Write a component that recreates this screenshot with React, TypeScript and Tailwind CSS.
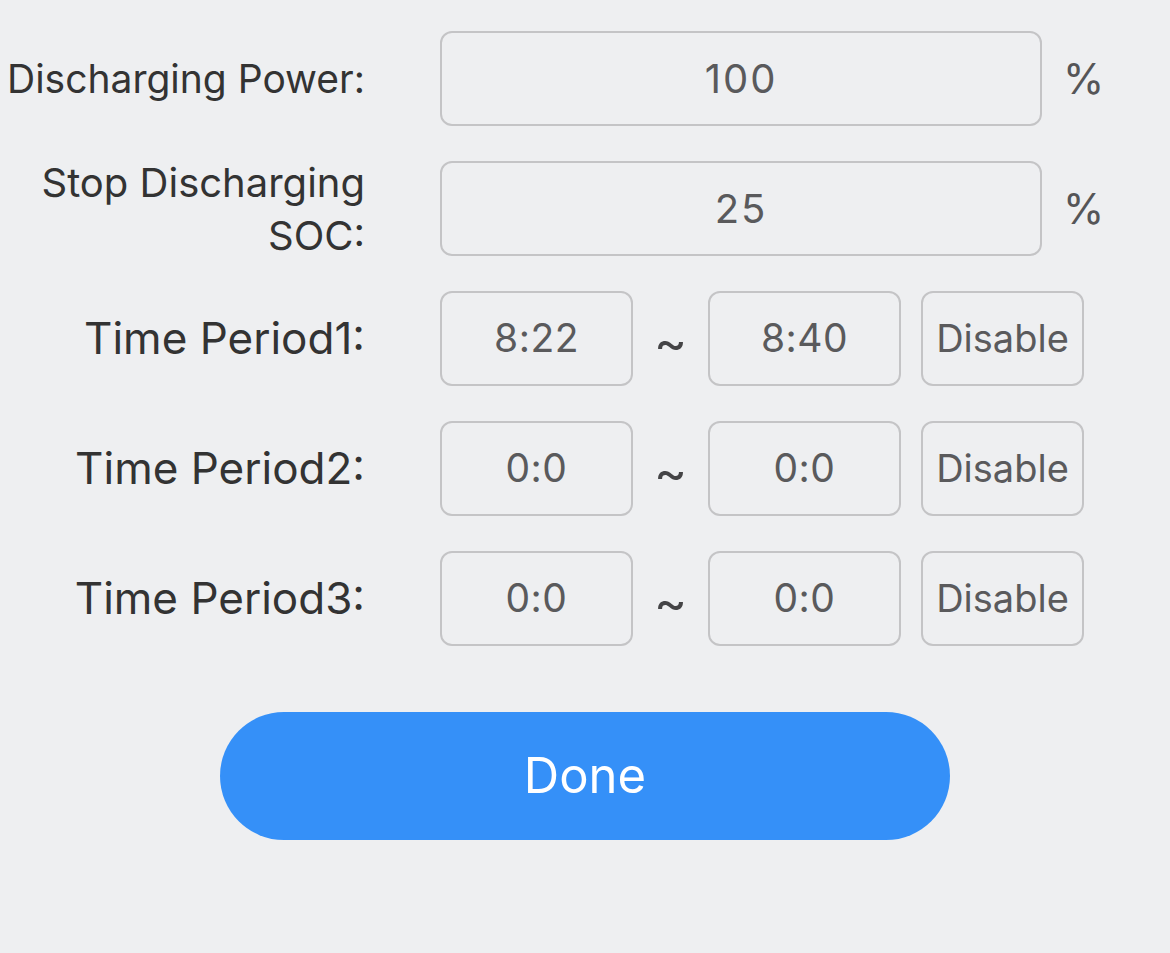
const font = { fontFamily: 'Inter, "Liberation Sans", Arial, sans-serif' };

function Label({ children, size }: { children: React.ReactNode; size: string }) {
  return (
    <div className={`w-[365px] shrink-0 text-right leading-[53px] text-[#333333] ${size}`}>
      {children}
    </div>
  );
}

function Box({ value, className }: { value: string; className: string }) {
  return (
    <div
      className={`h-[95px] shrink-0 flex items-center justify-center rounded-[12px] border-2 border-[#c4c4c6] text-[#5a5a5c] ${className}`}
    >
      {value}
    </div>
  );
}

function PercentRow({ label, value, size }: { label: React.ReactNode; value: string; size: string }) {
  return (
    <div className="flex h-[95px] items-center">
      <Label size={size}>{label}</Label>
      <Box value={value} className="ml-[75px] w-[602px] text-[40px] tracking-[2px]" />
      <span className="ml-[21px] text-[42px] text-[#555557]">%</span>
    </div>
  );
}

function TimeRow({ label, start, end }: { label: string; start: string; end: string }) {
  return (
    <div className="flex h-[95px] items-center">
      <Label size="text-[44px]">{label}</Label>
      <Box value={start} className="ml-[75px] w-[193px] text-[39px] tracking-[0.5px]" />
      <span className="w-[75px] pt-[6px] text-center text-[50px] leading-none text-[#444446]">~</span>
      <Box value={end} className="w-[193px] text-[39px] tracking-[0.5px]" />
      <Box value="Disable" className="ml-[20px] w-[163px] text-[38px]" />
    </div>
  );
}

export default function App() {
  return (
    <div className="min-h-[953px] w-[1170px] bg-[#eeeff1] pt-[31px]" style={font}>
      <div className="flex flex-col gap-[35px]">
        <PercentRow label="Discharging Power:" value="100" size="text-[39px]" />
        <PercentRow
          label={
            <>
              Stop Discharging
              <br />
              SOC:
            </>
          }
          value="25"
          size="text-[40px]"
        />
        <TimeRow label="Time Period1:" start="8:22" end="8:40" />
        <TimeRow label="Time Period2:" start="0:0" end="0:0" />
        <TimeRow label="Time Period3:" start="0:0" end="0:0" />
      </div>
      <div className="mt-[66px] flex justify-center">
        <button className="h-[128px] w-[730px] rounded-full bg-[#3590f8] text-[49px] text-white">
          Done
        </button>
      </div>
    </div>
  );
}
